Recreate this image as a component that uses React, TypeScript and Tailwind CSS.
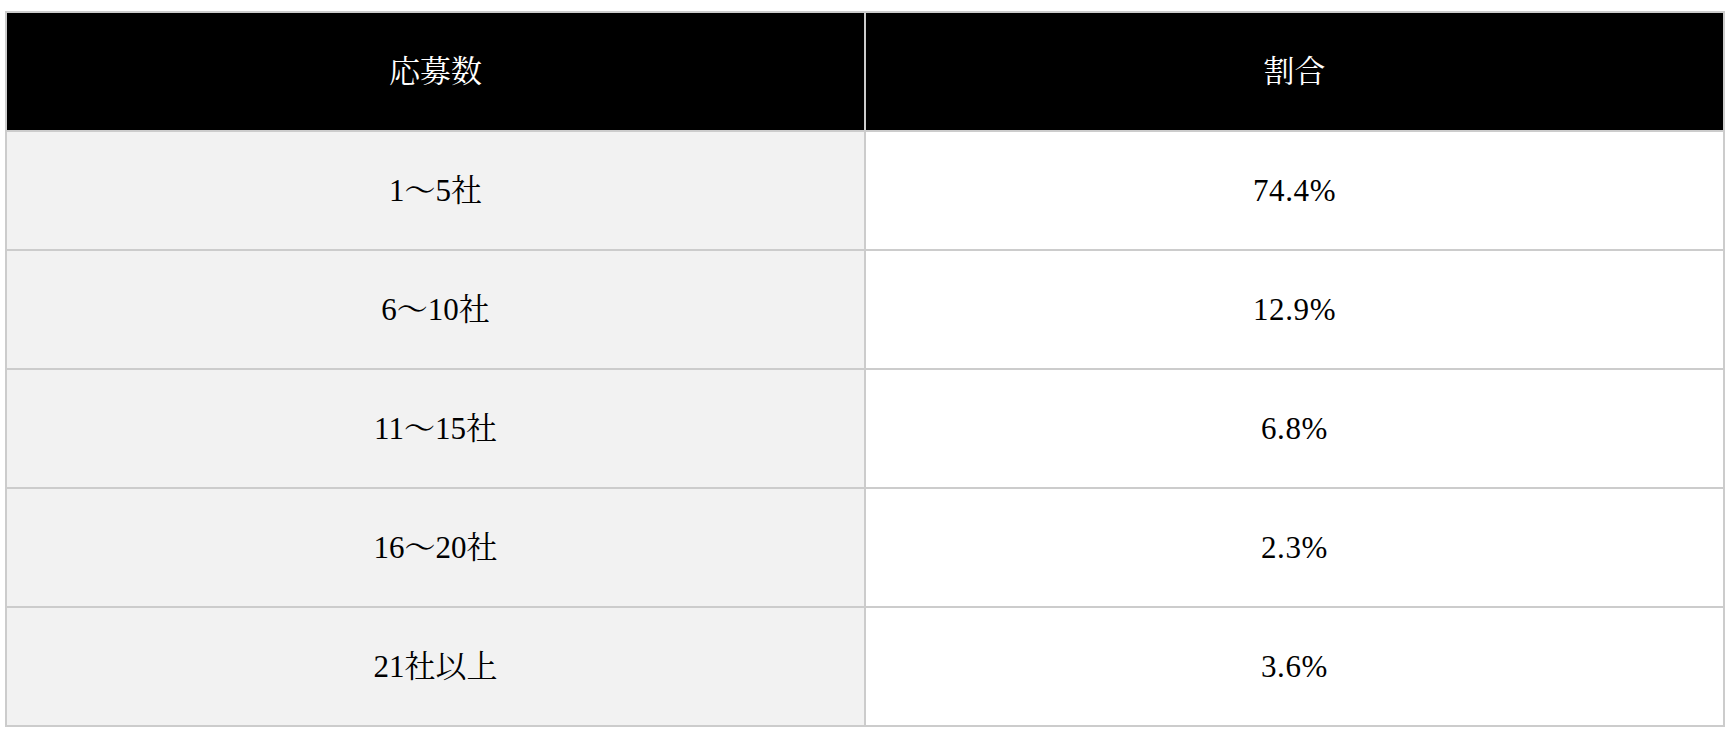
import React from 'react';

const rows = [
  { count: '1〜5社', ratio: '74.4%' },
  { count: '6〜10社', ratio: '12.9%' },
  { count: '11〜15社', ratio: '6.8%' },
  { count: '16〜20社', ratio: '2.3%' },
  { count: '21社以上', ratio: '3.6%' },
];

export default function App() {
  return (
    <div className="min-h-screen bg-white pl-[5px] pt-[11px]">
      <div className="w-[1720px] grid grid-cols-2 gap-[2px] p-[2px] bg-[#cccccc] text-[31px] leading-none font-['Liberation_Serif','Times_New_Roman','Noto_Serif_CJK_JP','Noto_Sans_CJK_JP',serif]">
        {/* Header */}
        <div className="h-[117px] bg-black text-white flex items-center justify-center">応募数</div>
        <div className="h-[117px] bg-black text-white flex items-center justify-center">割合</div>

        {/* Body */}
        {rows.map((row) => (
          <React.Fragment key={row.count}>
            <div className="h-[117px] bg-[#f2f2f2] text-black flex items-center justify-center">{row.count}</div>
            <div className="h-[117px] bg-white text-black flex items-center justify-center tracking-[0.02em]">{row.ratio}</div>
          </React.Fragment>
        ))}
      </div>
    </div>
  );
}
